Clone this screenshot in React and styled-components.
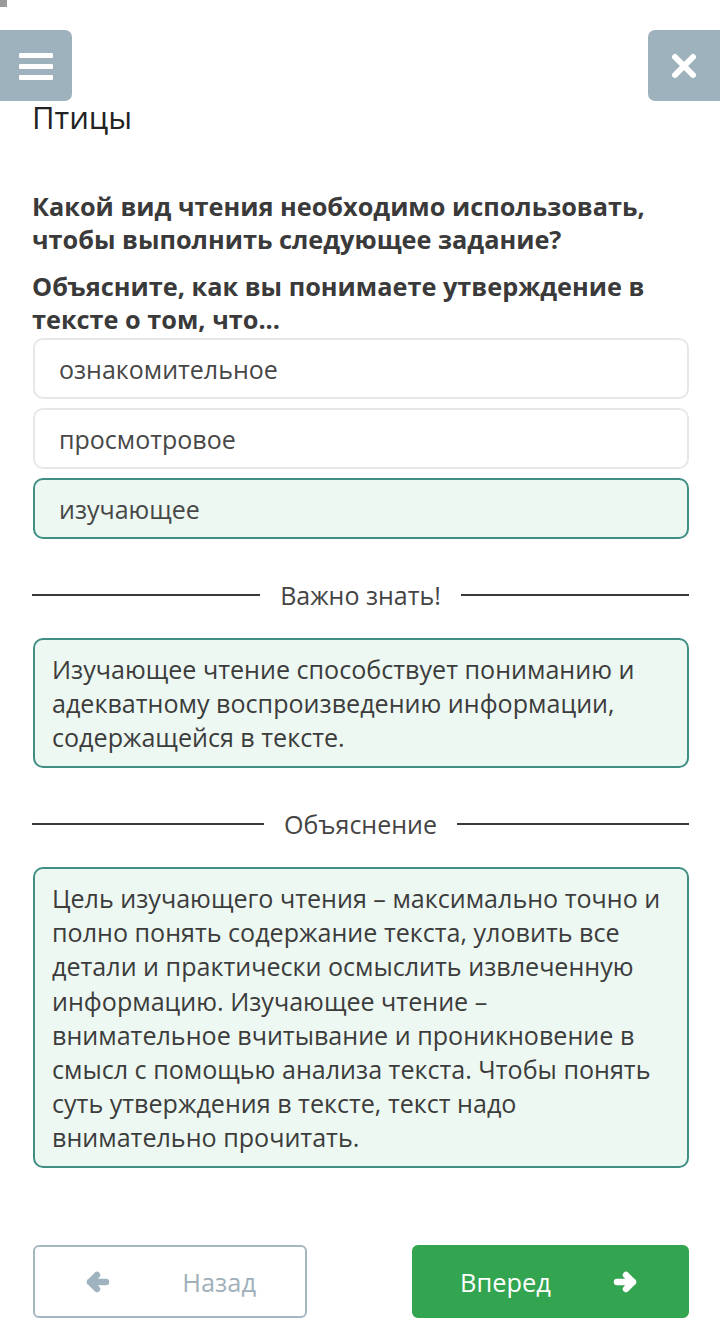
import styled, { createGlobalStyle } from 'styled-components';

const GlobalStyle = createGlobalStyle`
  body {
    margin: 0;
    background: #fff;
    font-family: 'Open Sans', 'Noto Sans', sans-serif;
    color: #3a3a3a;
  }
`;

const options = [
  { text: 'ознакомительное', correct: false },
  { text: 'просмотровое', correct: false },
  { text: 'изучающее', correct: true },
];

export default function App() {
  return (
    <>
      <GlobalStyle />
      <Page>
        <Corner />
        <MenuButton side="left" aria-label="menu">
          <svg width="34" height="28" viewBox="0 0 34 28">
            <rect x="0" y="1" width="34" height="5" rx="1" fill="#fff" />
            <rect x="0" y="12" width="34" height="5" rx="1" fill="#fff" />
            <rect x="0" y="23" width="34" height="5" rx="1" fill="#fff" />
          </svg>
        </MenuButton>
        <MenuButton side="right" aria-label="close">
          <svg width="28" height="28" viewBox="0 0 28 28">
            <path d="M5 5 L23 23 M23 5 L5 23" stroke="#fff" strokeWidth="6" strokeLinecap="round" />
          </svg>
        </MenuButton>

        <Title>Птицы</Title>
        <Question>Какой вид чтения необходимо использовать, чтобы выполнить следующее задание?</Question>
        <Question>Объясните, как вы понимаете утверждение в тексте о том, что...</Question>

        <OptionList>
          {options.map((o) => (
            <Option key={o.text} correct={o.correct}>{o.text}</Option>
          ))}
        </OptionList>

        <Divider>Важно знать!</Divider>
        <InfoBox>
          Изучающее чтение способствует пониманию и адекватному воспроизведению информации,
          содержащейся в тексте.
        </InfoBox>

        <Divider>Объяснение</Divider>
        <InfoBox>
          Цель изучающего чтения – максимально точно и полно понять содержание текста, уловить все
          детали и практически осмыслить извлеченную информацию. Изучающее чтение –{' '}
          внимательное вчитывание и проникновение в смысл с помощью анализа текста. Чтобы понять
          суть утверждения в тексте, текст надо внимательно прочитать.
        </InfoBox>

        <NavRow>
          <NavButton>
            <Arrow flip color="#9fb3be" />
            <NavLabel>Назад</NavLabel>
          </NavButton>
          <NavButton primary>
            <NavLabel>Вперед</NavLabel>
            <Arrow color="#fff" />
          </NavButton>
        </NavRow>
      </Page>
    </>
  );
}

function Arrow({ flip, color }) {
  return (
    <svg
      width="26"
      height="24"
      viewBox="0 0 26 24"
      style={{ transform: flip ? 'scaleX(-1)' : 'none' }}
    >
      <path
        d="M4 12 H20 M13 5 L20 12 L13 19"
        stroke={color}
        strokeWidth="6.5"
        strokeLinecap="round"
        strokeLinejoin="round"
        fill="none"
      />
    </svg>
  );
}

const Page = styled.div`
  position: relative;
  box-sizing: border-box;
  width: 720px;
  min-height: 1324px;
  padding: 97px 31px 6px 32px;
  display: flex;
  flex-direction: column;
`;

const Corner = styled.div`
  position: absolute;
  top: 0;
  left: 0;
  width: 7px;
  height: 7px;
  background: #9a9a9a;
`;

const MenuButton = styled.button`
  position: absolute;
  top: 30px;
  ${(p) => (p.side === 'left' ? 'left: 0;' : 'right: 0;')}
  width: 72px;
  height: 71px;
  border: none;
  padding: 0;
  background: #9db2bd;
  border-radius: ${(p) => (p.side === 'left' ? '0 7px 7px 0' : '7px 0 0 7px')};
  display: flex;
  align-items: center;
  justify-content: center;
`;

const Title = styled.h1`
  margin: 0 0 53px 0;
  font-size: 31px;
  line-height: 40px;
  font-weight: 400;
  color: #222;
`;

const Question = styled.p`
  margin: 0 0 14px 0;
  font-size: 25.3px;
  line-height: 33px;
  font-weight: 700;
  color: #3a3a3a;

  & + & {
    margin-bottom: 2px;
  }
`;

const OptionList = styled.div`
  display: flex;
  flex-direction: column;
  gap: 9px;
  margin-left: 1px;
`;

const Option = styled.div`
  box-sizing: border-box;
  height: 61px;
  display: flex;
  align-items: center;
  padding: 0 24px;
  font-size: 25px;
  color: #474747;
  border-radius: 10px;
  border: ${(p) => (p.correct ? '2px solid #3f8f84' : '2px solid #e6e8e8')};
  background: ${(p) => (p.correct ? '#edf8f2' : '#fff')};
`;

const Divider = styled.div`
  display: flex;
  align-items: center;
  gap: 20px;
  margin: 39px 0 26px 0;
  font-size: 25px;
  line-height: 34px;
  color: #444;

  &::before,
  &::after {
    content: '';
    flex: 1;
    height: 2px;
    background: #3a3a3a;
  }
`;

const InfoBox = styled.div`
  box-sizing: border-box;
  margin-left: 1px;
  padding: 12px 23px 12px 17px;
  font-size: 25.1px;
  line-height: 34.1px;
  color: #3c3c3c;
  background: #edf8f2;
  border: 2px solid #3f8f84;
  border-radius: 10px;
`;

const NavRow = styled.div`
  display: flex;
  justify-content: space-between;
  margin-top: 77px;
  margin-left: 1px;
`;

const NavButton = styled.button`
  box-sizing: border-box;
  width: ${(p) => (p.primary ? '277px' : '274px')};
  height: 73px;
  display: flex;
  align-items: center;
  justify-content: space-between;
  padding: ${(p) => (p.primary ? '0 48px 0 46px' : '0 49px 0 49px')};
  font-family: 'Open Sans', 'Noto Sans', sans-serif;
  border-radius: 6px;
  border: ${(p) => (p.primary ? '2px solid #33a44f' : '2px solid #a5b7c0')};
  background: ${(p) => (p.primary ? '#33a44f' : '#fff')};
  color: ${(p) => (p.primary ? '#fff' : '#9fb0ba')};
`;

const NavLabel = styled.span`
  font-size: 25.4px;
`;
